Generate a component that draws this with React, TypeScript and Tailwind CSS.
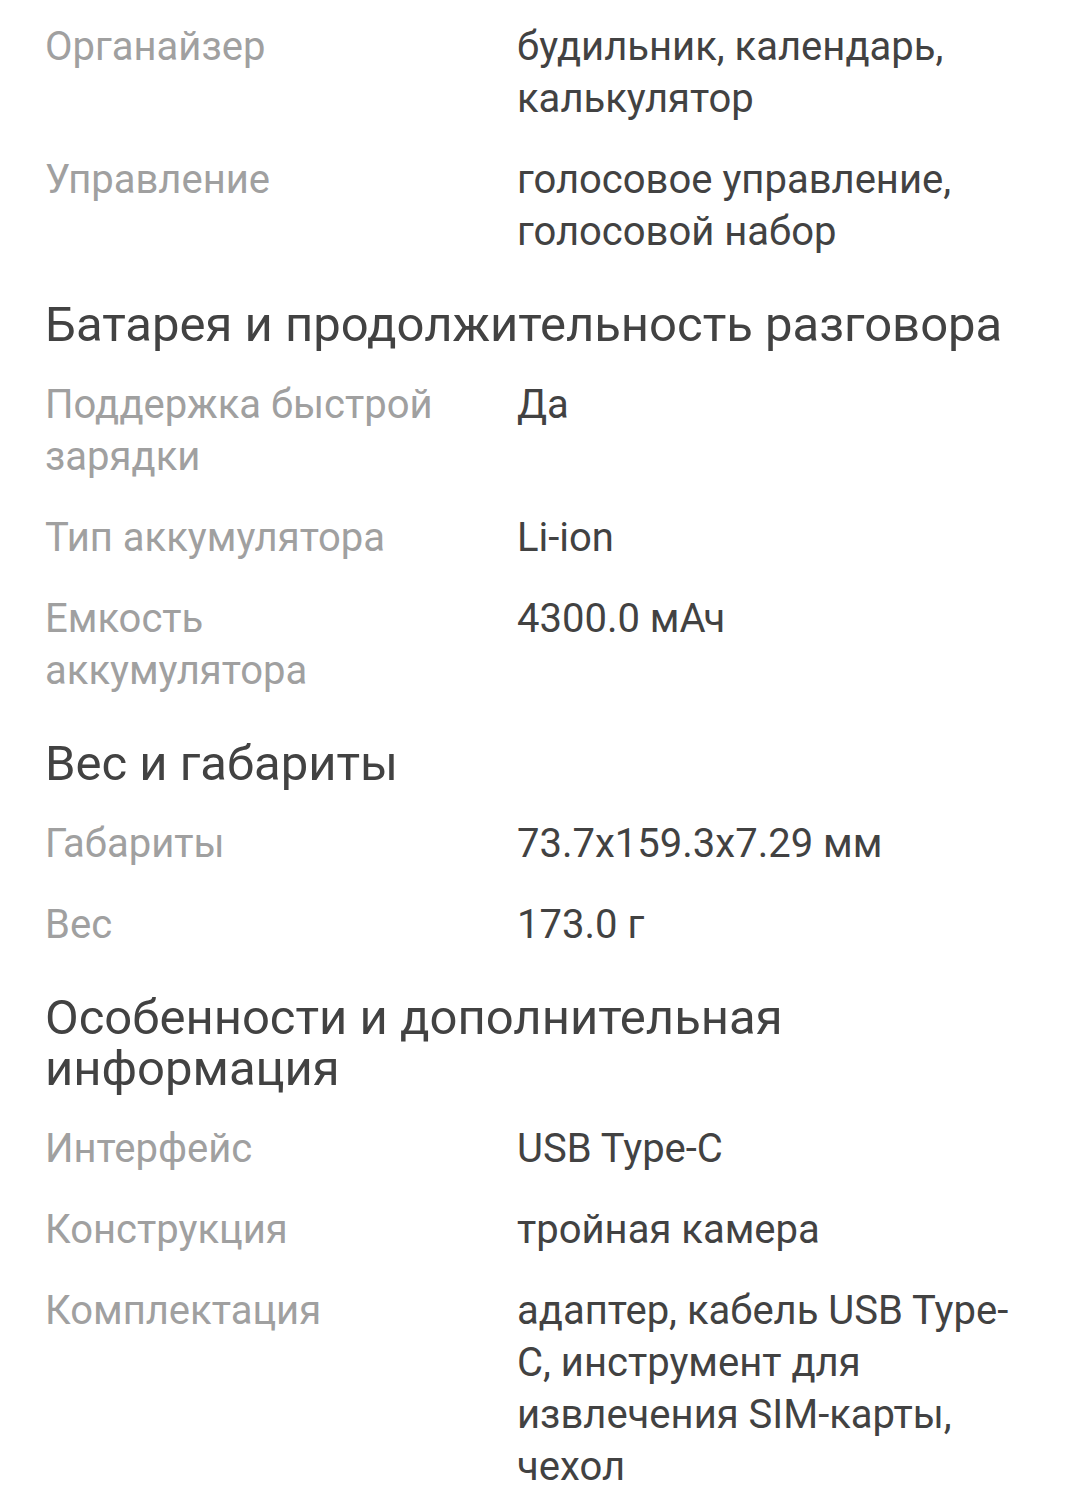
const sections: { title?: string; rows: [string, string][] }[] = [
  {
    rows: [
      ["Органайзер", "будильник, календарь, калькулятор"],
      ["Управление", "голосовое управление, голосовой набор"],
    ],
  },
  {
    title: "Батарея и продолжительность разговора",
    rows: [
      ["Поддержка быстрой зарядки", "Да"],
      ["Тип аккумулятора", "Li-ion"],
      ["Емкость аккумулятора", "4300.0 мАч"],
    ],
  },
  {
    title: "Вес и габариты",
    rows: [
      ["Габариты", "73.7x159.3x7.29 мм"],
      ["Вес", "173.0 г"],
    ],
  },
  {
    title: "Особенности и дополнительная информация",
    rows: [
      ["Интерфейс", "USB Type-C"],
      ["Конструкция", "тройная камера"],
      ["Комплектация", "адаптер, кабель USB Type-C, инструмент для извлечения SIM-карты, чехол"],
    ],
  },
];

export default function App() {
  return (
    <div className="min-h-screen bg-white px-[45px] pt-[21px] font-['Roboto',sans-serif]">
      {sections.map((section, i) => (
        <section key={i} className="flex flex-col">
          {section.title && (
            <h2 className="mt-[41px] mb-[29px] text-[49px] leading-[51px] font-normal text-[#424242]">
              {section.title}
            </h2>
          )}
          <div className="flex flex-col gap-[29px]">
            {section.rows.map(([label, value]) => (
              <div key={label} className="flex text-[40px] leading-[52px]">
                <div className="w-[472px] shrink-0 pr-[62px] text-[#a0a0a0]">{label}</div>
                <div className="flex-1 text-[#424242]">{value}</div>
              </div>
            ))}
          </div>
        </section>
      ))}
    </div>
  );
}
